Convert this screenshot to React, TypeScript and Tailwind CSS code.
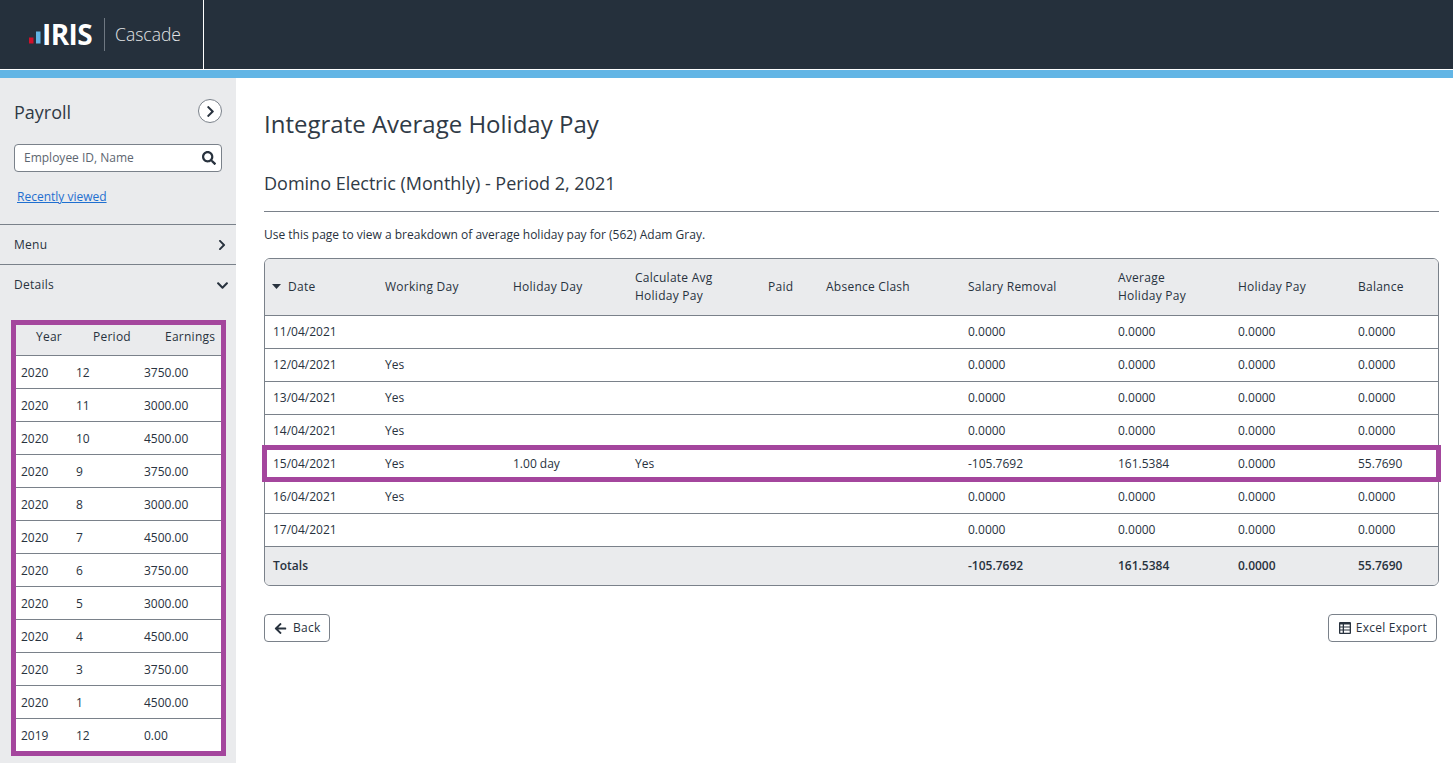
import React from "react";
import { FaChevronRight, FaChevronDown, FaSearch, FaArrowLeft } from "react-icons/fa";

const earnings = [
  ["2020", "12", "3750.00"],
  ["2020", "11", "3000.00"],
  ["2020", "10", "4500.00"],
  ["2020", "9", "3750.00"],
  ["2020", "8", "3000.00"],
  ["2020", "7", "4500.00"],
  ["2020", "6", "3750.00"],
  ["2020", "5", "3000.00"],
  ["2020", "4", "4500.00"],
  ["2020", "3", "3750.00"],
  ["2020", "1", "4500.00"],
  ["2019", "12", "0.00"],
];

const Z = "0.0000";
const rows = [
  ["11/04/2021", "", "", "", "", "", Z, Z, Z, Z],
  ["12/04/2021", "Yes", "", "", "", "", Z, Z, Z, Z],
  ["13/04/2021", "Yes", "", "", "", "", Z, Z, Z, Z],
  ["14/04/2021", "Yes", "", "", "", "", Z, Z, Z, Z],
  ["15/04/2021", "Yes", "1.00 day", "Yes", "", "", "-105.7692", "161.5384", Z, "55.7690"],
  ["16/04/2021", "Yes", "", "", "", "", Z, Z, Z, Z],
  ["17/04/2021", "", "", "", "", "", Z, Z, Z, Z],
];

const colW = ["w-[120px]", "w-[128px]", "w-[122px]", "w-[133px]", "w-[58px]", "w-[142px]", "w-[150px]", "w-[120px]", "w-[120px]", ""];
const head = "font-medium tracking-[0.25px]";

export default function App() {
  return (
    <div className="flex h-[763px] w-[1453px] flex-col overflow-hidden bg-white font-['Open_Sans',sans-serif] text-[12px] text-[#28323e]">
      <header className="h-[70px] shrink-0 border-b border-white bg-[#25303c]">
        <div className="flex h-[69px] w-[204px] items-center border-r border-white pl-[29px]">
          <svg width="12" height="20" viewBox="0 0 12 20" className="mb-[2px]">
            <rect x="0" y="13.500" width="4.500" height="6" fill="#d0112b" />
            <rect x="7" y="7.500" width="4.500" height="12" fill="#62b5e5" />
          </svg>
          <span className="mb-[2px] ml-[1px] text-[28px] leading-none font-bold tracking-[-0.6px] text-white">IRIS</span>
          <span className="ml-[12px] h-[33px] w-px bg-[#6f7882]" />
          <span className="mb-[1px] ml-[10px] text-[17.500px] font-light text-[#e3e5e7]">Cascade</span>
        </div>
      </header>
      <div className="h-[8px] shrink-0 bg-[#62b5e5]" />
      <div className="flex min-h-0 flex-1">
        <aside className="flex w-[236px] shrink-0 flex-col bg-[#eaebed]">
          <div className="flex items-center justify-between pt-[22px] pr-[14px] pl-[14px]">
            <span className="text-[18px] leading-[25px] text-[#2f3a46]">Payroll</span>
            <span className="mt-[-3px] flex h-[24px] w-[24px] items-center justify-center rounded-full border border-[#7a818a] bg-white">
              <FaChevronRight size={13} />
            </span>
          </div>
          <div className="mx-[14px] mt-[19px] flex h-[28px] items-center justify-between rounded-[4px] border border-[#7a818a] bg-white pr-[5px] pl-[9px] text-[#5d6670]">
            <span>Employee ID, Name</span>
            <FaSearch size={14} className="text-[#28323e]" />
          </div>
          <a className="mt-[16px] ml-[17px] leading-[18px] text-[#1f6fd0] underline">Recently viewed</a>
          <div className={`mt-[18px] flex h-[40px] items-center justify-between border-t border-[#7a818a] pr-[8px] pl-[14px] ${head}`}>
            <span>Menu</span>
            <FaChevronRight size={12} />
          </div>
          <div className={`flex h-[41px] items-center justify-between border-t border-[#7a818a] pr-[7px] pl-[14px] ${head}`}>
            <span>Details</span>
            <FaChevronDown size={13} />
          </div>
          <div className="mt-[15px] ml-[11px] w-[215px] border-[5px] border-[#a4469d]">
            <div className={`flex h-[30px] pt-[3px] ${head}`}>
              <span className="ml-[20px] w-[57px]">Year</span>
              <span className="w-[72px]">Period</span>
              <span>Earnings</span>
            </div>
            {earnings.map((r, i) => (
              <div key={i} className="flex h-[33px] items-center border-t border-[#7a818a] bg-white pt-[1px]">
                <span className="ml-[5px] w-[55px]">{r[0]}</span>
                <span className="w-[68px]">{r[1]}</span>
                <span>{r[2]}</span>
              </div>
            ))}
          </div>
        </aside>
        <main className="relative min-w-0 flex-1 pt-[29px] pr-[14px] pl-[28px]">
          <h1 className="text-[24px] leading-[34px] text-[#2f3a46]">Integrate Average Holiday Pay</h1>
          <h2 className="mt-[30px] border-b border-[#7a818a] pb-[15px] text-[18px] leading-[25px] text-[#2f3a46]">
            Domino Electric (Monthly) - Period 2, 2021
          </h2>
          <p className="mt-[14px] leading-[18px]">Use this page to view a breakdown of average holiday pay for (562) Adam Gray.</p>
          <div className="relative mt-[14px] overflow-hidden rounded-[6px] border border-[#7a818a]">
            <table className="w-full table-fixed border-collapse">
              <thead>
                <tr className="h-[56px] bg-[#eaebed] text-left">
                  <th className={`${colW[0]} pl-[7px] ${head}`}>
                    <span className="flex items-center gap-[7px]">
                      <svg width="9" height="5" viewBox="0 0 9 5">
                        <path d="M0 0h9L4.500 5z" fill="#28323e" />
                      </svg>
                      Date
                    </span>
                  </th>
                  <th className={`${colW[1]} ${head}`}>Working Day</th>
                  <th className={`${colW[2]} ${head}`}>Holiday Day</th>
                  <th className={`${colW[3]} leading-[18px] ${head}`}>Calculate Avg<br />Holiday Pay</th>
                  <th className={`${colW[4]} ${head}`}>Paid</th>
                  <th className={`${colW[5]} ${head}`}>Absence Clash</th>
                  <th className={`${colW[6]} ${head}`}>Salary Removal</th>
                  <th className={`${colW[7]} leading-[18px] ${head}`}>Average<br />Holiday Pay</th>
                  <th className={`${colW[8]} ${head}`}>Holiday Pay</th>
                  <th className={head}>Balance</th>
                </tr>
              </thead>
              <tbody>
                {rows.map((r) => (
                  <tr key={r[0]} className="h-[33px] border-t border-[#7a818a]">
                    {r.map((c, i) => (
                      <td key={i} className={i === 0 ? "pl-[8px]" : ""}>{c}</td>
                    ))}
                  </tr>
                ))}
              </tbody>
              <tfoot>
                <tr className="h-[39px] border-t border-[#7a818a] bg-[#eaebed] font-semibold">
                  <td className="pl-[8px]">Totals</td>
                  <td /><td /><td /><td /><td />
                  <td>-105.7692</td>
                  <td>161.5384</td>
                  <td>0.0000</td>
                  <td>55.7690</td>
                </tr>
              </tfoot>
            </table>
          </div>
          <div className="pointer-events-none absolute top-[367px] left-[26px] h-[37px] w-[1179px] border-[5px] border-[#a4469d]" />
          <div className="mt-[28px] flex justify-between pr-[2px]">
            <button className={`flex h-[28px] items-center gap-[6px] rounded-[4px] border border-[#7a818a] bg-white pr-[9px] pl-[9px] ${head}`}>
              <FaArrowLeft size={13} />
              Back
            </button>
            <button className={`flex h-[28px] items-center gap-[5px] rounded-[4px] border border-[#7a818a] bg-white pr-[9px] pl-[10px] ${head}`}>
              <svg width="12" height="12" viewBox="0 0 12 12">
                <path fillRule="evenodd" d="M1 0h10a1 1 0 0 1 1 1v10a1 1 0 0 1-1 1H1a1 1 0 0 1-1-1V1a1 1 0 0 1 1-1zM1.300 2.500v2h2.400v-2zm3.700 0v2h5.700v-2zM1.300 5.600v1.800h2.400V5.600zm3.700 0v1.800h5.700V5.600zM1.300 8.500v2.200h2.400V8.500zm3.700 0v2.200h5.700V8.500z" fill="#28323e" />
              </svg>
              Excel Export
            </button>
          </div>
        </main>
      </div>
    </div>
  );
}
